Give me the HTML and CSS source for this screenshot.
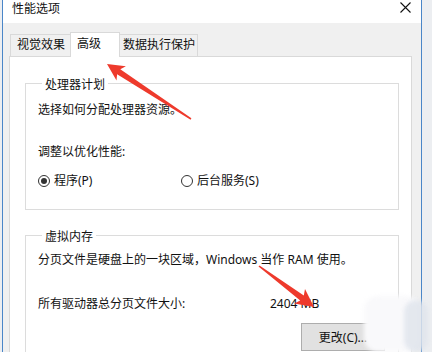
FILE: index.html
```html
<!DOCTYPE html>
<html lang="zh-CN">
<head>
<meta charset="UTF-8">
<title>性能选项</title>
<link rel="stylesheet" href="styles.css">
</head>
<body>

<div class="window">
  <div class="titlebar">
    <span class="title">性能选项</span>
    <svg class="close" width="11" height="11" viewBox="0 0 11 11"><path d="M0.5 0.5L10.5 10.5M10.5 0.5L0.5 10.5" stroke="#111" stroke-width="1.1" fill="none"/></svg>
  </div>

  <div class="content">
    <div class="tabs">
      <div class="tab tab-first">视觉效果</div>
      <div class="tab active">高级</div>
      <div class="tab tab-last">数据执行保护</div>
    </div>

    <div class="panel">
      <fieldset class="group">
        <legend>处理器计划</legend>
        <p class="line first">选择如何分配处理器资源。</p>
        <p class="line gap">调整以优化性能:</p>
        <div class="radios">
          <label class="radio checked"><span class="dot"></span>程序(P)</label>
          <label class="radio"><span class="dot"></span>后台服务(S)</label>
        </div>
      </fieldset>

      <fieldset class="group vm">
        <legend>虚拟内存</legend>
        <p class="line first">分页文件是硬盘上的一块区域，Windows 当作 RAM 使用。</p>
        <div class="size-row">
          <span class="size-label">所有驱动器总分页文件大小:</span>
          <span>2404 MB</span>
        </div>
        <div class="btn-row"><button class="btn">更改(C)...</button></div>
      </fieldset>
    </div>
  </div>
</div>

<div class="watermark"></div>
<div class="watermark wm2"></div>

<!-- red annotation arrows -->
<svg class="arrows" width="432" height="352" viewBox="0 0 432 352">
  <polygon fill="#ee3a2c" points="107,64 125.9,66.2 120.3,69.2 191.4,118.3 190.6,119.7 117.1,74.2 116.5,80.4"/>
  <polygon fill="#ee3a2c" points="314,307 305,289 303.8,295.6 259.5,265.4 258.5,266.6 300.2,300.4 294.2,303.4"/>
</svg>

</body>
</html>
```

FILE: styles.css
```css
*{box-sizing:border-box}
html,body{margin:0;padding:0}
body{
  width:432px;height:352px;overflow:hidden;position:relative;
  background:#eceef1;
  font-family:"Noto Sans","Noto Sans CJK SC",sans-serif;font-size:12px;color:#111;
}
.window{
  margin-left:2px;width:420px;height:352px;overflow:hidden;
  border-left:1px solid #4a86c8;border-right:1px solid #4a86c8;
  background:#f0f0f0;
}
.titlebar{
  height:23px;background:#fff;position:relative;
  padding-left:9px;line-height:17px;
}
.title{color:#111}
.close{position:absolute;right:10px;top:2px}

.content{padding:9px 9px 0 6px}
.tabs{display:flex;align-items:flex-end;height:24px;padding-left:1px}
.tab{
  height:22px;line-height:20px;
  border:1px solid #d9d9d9;border-bottom:none;
  background:#f0f0f0;white-space:nowrap;
}
.tab-first{width:60px;padding-left:6px;border-right:none}
.tab-last{padding:0 2px 0 3px;border-left:none}
.tab.active{
  width:50px;height:25px;line-height:21px;padding-left:6px;
  background:#fff;margin-bottom:-1px;position:relative;z-index:1;
}
.panel{
  background:#fff;border:1px solid #d9d9d9;border-bottom:none;
  height:296px;overflow:hidden;
}

.group{
  margin:16px 12px 0 15px;padding:0 13px 20px 12px;
  border:1px solid #dcdcdc;min-width:0;
}
.group legend{
  margin-left:4px;padding:4px 3px 0;line-height:16px;
}
.line{margin:0;line-height:16px}
.line.first{margin-top:9px}
.line.gap{margin-top:26px}
.radios{display:flex;margin-top:13px;line-height:16px}
.radio{display:flex;align-items:center;gap:4px}
.radio:first-child{width:143px}
.dot{
  width:12px;height:12px;border-radius:50%;border:1px solid #333;
  display:flex;align-items:center;justify-content:center;
}
.radio.checked .dot::after{
  content:"";width:6px;height:6px;border-radius:50%;background:#333;
}

.vm{margin-top:15px;padding-top:0;padding-bottom:10px}
.vm .line.first{margin-top:7px}
.size-row{display:flex;margin-top:28px;line-height:16px}
.size-label{width:232px}
.btn-row{display:flex;justify-content:flex-end;margin-top:11px}
.btn{
  width:84px;height:28px;padding:0;
  background:#e1e1e1;border:1px solid #adadad;
  font:inherit;color:#111;
}

.watermark{
  position:absolute;left:364px;top:296px;width:56px;height:56px;
  background:#f9f9fb;border-radius:14px;filter:blur(2px);
}
.wm2{left:404px;top:300px;width:24px;height:52px;background:#dfe4ec;opacity:.8}
.arrows{position:absolute;left:0;top:0;pointer-events:none}
```
